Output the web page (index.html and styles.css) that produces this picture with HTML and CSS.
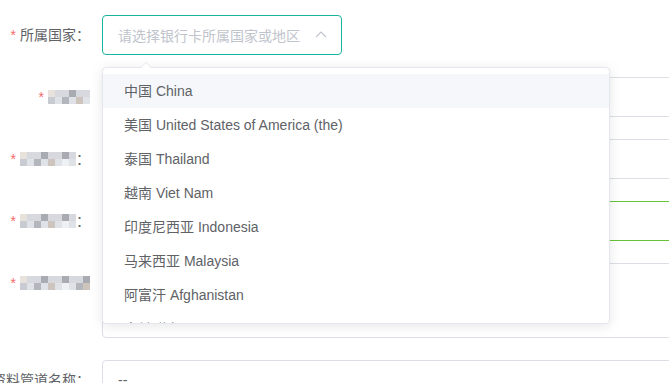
FILE: index.html
```html
<!DOCTYPE html>
<html lang="zh">
<head>
    <meta charset="UTF-8">
    <meta name="viewport" content="width=device-width, initial-scale=1.0">
    <title>银行卡信息</title>
    <link rel="stylesheet" href="styles.css">
</head>
<body>
    <form class="form">
        <!-- 所属国家 -->
        <div class="form-item">
            <label class="label"><span class="req">*</span>所属国家：</label>
            <div class="content">
                <div class="select">
                    <span class="placeholder">请选择银行卡所属国家或地区</span>
                    <svg class="caret" width="12" height="8" viewBox="0 0 12 8"><polyline points="1,7 6,2 11,7" fill="none" stroke="#c0c4cc" stroke-width="1.2"/></svg>
                </div>
                <div class="dropdown">
                    <div class="arrow"></div>
                    <div class="wrap">
                        <ul class="options">
                            <li class="option hover">中国 China</li>
                            <li class="option">美国 United States of America (the)</li>
                            <li class="option">泰国 Thailand</li>
                            <li class="option">越南 Viet Nam</li>
                            <li class="option">印度尼西亚 Indonesia</li>
                            <li class="option">马来西亚 Malaysia</li>
                            <li class="option">阿富汗 Afghanistan</li>
                            <li class="option">奥兰群岛 Aland Islands</li>
                        </ul>
                    </div>
                </div>
            </div>
        </div>

        <div class="form-item">
            <label class="label"><span class="req">*</span><span class="mosaic"><i></i><i></i><i></i><i></i><i></i><i></i><i></i><i></i><i></i><i></i><i></i><i></i></span></label>
            <div class="content"><div class="input"></div></div>
        </div>

        <div class="form-item">
            <label class="label"><span class="req">*</span><span class="mosaic"><i></i><i></i><i></i><i></i><i></i><i></i><i></i><i></i><i></i><i></i><i></i><i></i><i></i><i></i><i></i><i></i></span>：</label>
            <div class="content"><div class="input"></div></div>
        </div>

        <div class="form-item">
            <label class="label"><span class="req">*</span><span class="mosaic"><i></i><i></i><i></i><i></i><i></i><i></i><i></i><i></i><i></i><i></i><i></i><i></i><i></i><i></i><i></i><i></i></span>：</label>
            <div class="content"><div class="input success"></div></div>
        </div>

        <div class="form-item">
            <label class="label"><span class="req">*</span><span class="mosaic"><i></i><i></i><i></i><i></i><i></i><i></i><i></i><i></i><i></i><i></i><i></i><i></i><i></i><i></i><i></i><i></i><i></i><i></i><i></i><i></i></span></label>
            <div class="content"><div class="textarea"></div></div>
        </div>

        <div class="form-item">
            <label class="label">资料管道名称：</label>
            <div class="content"><div class="input"><span class="value">--</span></div></div>
        </div>
    </form>
</body>
</html>
```

FILE: styles.css
```css
/* Pagina */
html, body {
    margin: 0;
    padding: 0;
    overflow: hidden;
    background-color: #fff;
}
body {
    font-family: 'Liberation Sans', 'Noto Sans CJK SC', sans-serif;
    font-size: 14px;
    color: #606266;
}
.form {
    padding-top: 15px;
}
.form-item {
    display: flex;
    margin-bottom: 22px;
}
.label {
    flex: none;
    width: 90px;
    padding-right: 12px;
    height: 40px;
    line-height: 40px;
    display: flex;
    justify-content: flex-end;
    align-items: center;
    white-space: nowrap;
    color: #606266;
}
.req {
    color: #f56c6c;
    margin-right: 4px;
}
.content {
    position: relative;
    flex: none;
    width: 640px;
}

/* Select */
.select {
    width: 240px;
    height: 40px;
    box-sizing: border-box;
    border: 1px solid #1ab39f;
    border-radius: 4px;
    padding: 0 15px;
    display: flex;
    align-items: center;
    justify-content: space-between;
}
.placeholder {
    color: #c0c4cc;
}
.caret {
    margin-top: -2px;
    margin-right: -1px;
}

/* Menu a tendina */
.dropdown {
    position: absolute;
    top: 52px;
    left: 0;
    width: 508px;
    box-sizing: border-box;
    border: 1px solid #e4e7ed;
    border-radius: 4px;
    background-color: #fff;
    box-shadow: 0 2px 12px rgba(0, 0, 0, 0.1);
    z-index: 10;
}
.arrow {
    position: absolute;
    top: -6px;
    left: 37px;
    width: 0;
    height: 0;
    border-left: 6px solid transparent;
    border-right: 6px solid transparent;
    border-bottom: 6px solid #e4e7ed;
}
.arrow::after {
    content: '';
    position: absolute;
    top: 1px;
    left: -6px;
    border-left: 6px solid transparent;
    border-right: 6px solid transparent;
    border-bottom: 6px solid #fff;
}
.wrap {
    height: 255px;
    overflow: hidden;
}
.options {
    list-style: none;
    margin: 0;
    padding: 6px 0;
}
.option {
    height: 34px;
    line-height: 34px;
    padding: 0 20px 0 21px;
    white-space: nowrap;
    color: #606266;
}
.option.hover {
    background-color: #f5f7fa;
}

/* Campi */
.input {
    height: 40px;
    box-sizing: border-box;
    border: 1px solid #dcdfe6;
    border-radius: 4px;
    padding: 0 15px;
    display: flex;
    align-items: center;
}
.input.success {
    border-color: #67c23a;
}
.textarea {
    height: 75px;
    box-sizing: border-box;
    border: 1px solid #dcdfe6;
    border-radius: 4px;
}
.value {
    color: #606266;
}

/* Etichette sfocate */
.mosaic {
    display: inline-grid;
    grid-auto-flow: column;
    grid-template-rows: 7px 7px;
    grid-auto-columns: 7px;
    filter: blur(0.7px);
}
.mosaic i {
    display: block;
    background-color: #c8cbd2;
}
.mosaic i:nth-child(3n) { background-color: #b4b6bd; }
.mosaic i:nth-child(4n) { background-color: #dfe3e8; }
.mosaic i:nth-child(5n) { background-color: #cdc4be; }
.mosaic i:nth-child(7n) { background-color: #eef1f4; }
.mosaic i:nth-child(2n+1) { background-color: #d7d9de; }
.mosaic i:nth-child(6n+1) { background-color: #a9abb3; }
.mosaic i:first-child { background-color: #e8e2dc; }
```
